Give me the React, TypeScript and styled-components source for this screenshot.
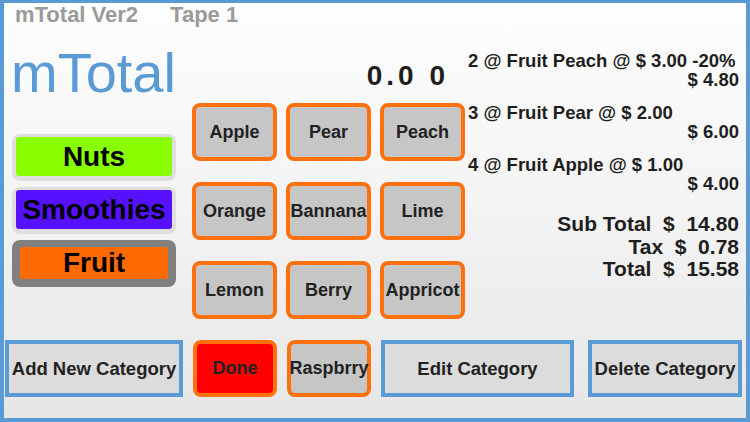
import React from "react";
import styled, { createGlobalStyle } from "styled-components";

const Global = createGlobalStyle`
  html, body { margin: 0; padding: 0; }
  body { font-family: "Liberation Sans", Arial, Helvetica, sans-serif; }
  * { box-sizing: border-box; }
`;

const BLUE = "#5b9bd5";
const ORANGE = "#ff700f";

const Frame = styled.div`
  width: 750px;
  height: 422px;
  border: 4px solid ${BLUE};
  border-top-width: 3px;
  background: linear-gradient(#fefefe 0%, #f2f2f2 55%, #e6e6e6 100%);
  display: flex;
  flex-direction: column;
  overflow: hidden;
`;

const Header = styled.div`
  height: 24px;
  padding-left: 11px;
  display: flex;
  gap: 32px;
  font-size: 22px;
  line-height: 24px;
  font-weight: bold;
  color: #9a9a9a;
`;

const Body = styled.div`
  flex: 1;
  display: flex;
  align-items: flex-start;
`;

const LeftCol = styled.div`
  width: 188px;
  display: flex;
  flex-direction: column;
`;

const Title = styled.div`
  margin-top: 16px;
  margin-left: 7px;
  height: 60px;
  font-size: 56px;
  line-height: 60px;
  color: ${BLUE};
`;

const Categories = styled.div`
  margin-top: 31px;
  margin-left: 8px;
  width: 164px;
  display: flex;
  flex-direction: column;
  gap: 6px;
`;

const CategoryOuter = styled.div<{ $selected?: boolean }>`
  height: 47px;
  border-radius: 8px;
  background: ${(p) => (p.$selected ? "#808080" : "#dedede")};
  padding: ${(p) => (p.$selected ? "7px 8px 8px" : "3px 4px 5px")};
  display: flex;
`;

const CategoryInner = styled.div<{ $color: string }>`
  flex: 1;
  background: ${(p) => p.$color};
  border-radius: 3px;
  display: flex;
  align-items: center;
  justify-content: center;
  font-size: 28px;
  font-weight: bold;
  color: #000;
  white-space: nowrap;
`;

const CenterCol = styled.div`
  width: 273px;
  display: flex;
  flex-direction: column;
`;

const Display = styled.div`
  margin-top: 33px;
  height: 32px;
  padding-right: 16px;
  text-align: right;
  font-size: 28px;
  line-height: 32px;
  font-weight: bold;
  letter-spacing: 4px;
  color: #1e1e1e;
  white-space: pre;
`;

const ItemGrid = styled.div`
  margin-top: 11px;
  display: grid;
  grid-template-columns: repeat(3, 85px);
  grid-auto-rows: 58px;
  column-gap: 9px;
  row-gap: 21px;
`;

const ItemButton = styled.div<{ $bg?: string; $w?: number }>`
  width: ${(p) => (p.$w ? `${p.$w}px` : "auto")};
  height: 100%;
  border: 4px solid ${ORANGE};
  border-radius: 8px;
  background: ${(p) => p.$bg || "#c6c6c6"};
  display: flex;
  align-items: center;
  justify-content: center;
  font-size: 18px;
  font-weight: bold;
  color: #222;
  white-space: nowrap;
  overflow: visible;
`;

const RightCol = styled.div`
  flex: 1;
  padding: 24px 7px 0 3px;
  display: flex;
  flex-direction: column;
  color: #1e1e1e;
  font-weight: bold;
`;

const Entry = styled.div`
  font-size: 18.5px;
  line-height: 19px;
  margin-bottom: 14px;
  white-space: pre;
`;

const EntryPrice = styled.div`
  text-align: right;
`;

const Totals = styled.div`
  margin-top: 6px;
  font-size: 21px;
  line-height: 22.5px;
  text-align: right;
  white-space: pre;
`;

const BottomBar = styled.div`
  height: 57px;
  margin-bottom: 21px;
  padding-left: 1px;
  display: flex;
  gap: 10px;
`;

const BlueButton = styled.div<{ $w: number; $ml?: number }>`
  width: ${(p) => p.$w}px;
  margin-left: ${(p) => p.$ml || 0}px;
  border: 4px solid ${BLUE};
  background: #dcdcdc;
  display: flex;
  align-items: center;
  justify-content: center;
  font-size: 18.5px;
  font-weight: bold;
  color: #222;
  white-space: nowrap;
`;

const items = [
  "Apple",
  "Pear",
  "Peach",
  "Orange",
  "Bannana",
  "Lime",
  "Lemon",
  "Berry",
  "Appricot",
];

const entries = [
  { line: "2 @ Fruit Peach @ $ 3.00 -20%", price: "$ 4.80" },
  { line: "3 @ Fruit Pear @ $ 2.00", price: "$ 6.00" },
  { line: "4 @ Fruit Apple @ $ 1.00", price: "$ 4.00" },
];

export default function App() {
  return (
    <>
      <Global />
      <Frame>
        <Header>
          <span>mTotal Ver2</span>
          <span>Tape 1</span>
        </Header>
        <Body>
          <LeftCol>
            <Title>mTotal</Title>
            <Categories>
              <CategoryOuter>
                <CategoryInner $color="#88fe00">Nuts</CategoryInner>
              </CategoryOuter>
              <CategoryOuter>
                <CategoryInner $color="#5612ff">Smoothies</CategoryInner>
              </CategoryOuter>
              <CategoryOuter $selected>
                <CategoryInner $color="#ff6a00">Fruit</CategoryInner>
              </CategoryOuter>
            </Categories>
          </LeftCol>
          <CenterCol>
            <Display>0.0 0</Display>
            <ItemGrid>
              {items.map((it) => (
                <ItemButton key={it}>{it}</ItemButton>
              ))}
            </ItemGrid>
          </CenterCol>
          <RightCol>
            {entries.map((e) => (
              <Entry key={e.line}>
                <div>{e.line}</div>
                <EntryPrice>{e.price}</EntryPrice>
              </Entry>
            ))}
            <Totals>
              <div>Sub Total  $  14.80</div>
              <div>Tax  $  0.78</div>
              <div>Total  $  15.58</div>
            </Totals>
          </RightCol>
        </Body>
        <BottomBar>
          <BlueButton $w={178}>Add New Category</BlueButton>
          <ItemButton $w={84} $bg="#ff0000">Done</ItemButton>
          <ItemButton $w={84}>Raspbrry</ItemButton>
          <BlueButton $w={193}>Edit Category</BlueButton>
          <BlueButton $w={154} $ml={4}>Delete Category</BlueButton>
        </BottomBar>
      </Frame>
    </>
  );
}
